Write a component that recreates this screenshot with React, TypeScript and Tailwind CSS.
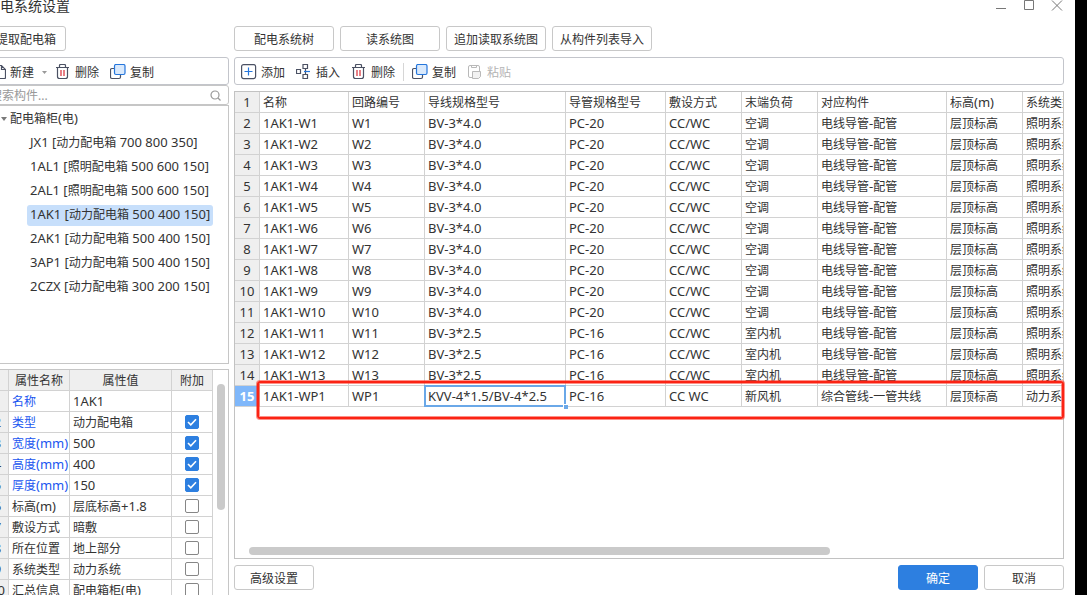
import { useState, type ReactNode } from "react";
import clsx from "clsx";

const circuitColumns = ["名称", "回路编号", "导线规格型号", "导管规格型号", "敷设方式", "末端负荷", "对应构件", "标高(m)", "系统类型"];

const acCircuit = (n: number) => [`1AK1-W${n}`, `W${n}`, "BV-3*4.0", "PC-20", "CC/WC", "空调", "电线导管-配管", "层顶标高", "照明系统"];
const indoorCircuit = (n: number) => [`1AK1-W${n}`, `W${n}`, "BV-3*2.5", "PC-16", "CC/WC", "室内机", "电线导管-配管", "层顶标高", "照明系统"];

const circuits: string[][] = [
  ...[1, 2, 3, 4, 5, 6, 7, 8, 9, 10].map(acCircuit),
  ...[11, 12, 13].map(indoorCircuit),
  ["1AK1-WP1", "WP1", "KVV-4*1.5/BV-4*2.5", "PC-16", "CC WC", "新风机", "综合管线-一管共线", "层顶标高", "动力系统"],
];

const boxes = [
  "JX1 [动力配电箱 700 800 350]",
  "1AL1 [照明配电箱 500 600 150]",
  "2AL1 [照明配电箱 500 600 150]",
  "1AK1 [动力配电箱 500 400 150]",
  "2AK1 [动力配电箱 500 400 150]",
  "3AP1 [动力配电箱 500 400 150]",
  "2CZX [动力配电箱 300 200 150]",
];

type Property = { name: string; value: string; key?: boolean; extra?: boolean };

const properties: Property[] = [
  { name: "名称", value: "1AK1", key: true },
  { name: "类型", value: "动力配电箱", key: true, extra: true },
  { name: "宽度(mm)", value: "500", key: true, extra: true },
  { name: "高度(mm)", value: "400", key: true, extra: true },
  { name: "厚度(mm)", value: "150", key: true, extra: true },
  { name: "标高(m)", value: "层底标高+1.8", extra: false },
  { name: "敷设方式", value: "暗敷", extra: false },
  { name: "所在位置", value: "地上部分", extra: false },
  { name: "系统类型", value: "动力系统", extra: false },
  { name: "汇总信息", value: "配电箱柜(电)", extra: false },
];

// Latin runs are set one size up so they balance with the 12px Chinese text
const Txt = ({ children }: { children: string }) => (
  <>
    {children.split(/([\x20-\x7e]+)/).map((part, i) =>
      i % 2 ? <span key={i} className="text-[13px] leading-none">{part}</span> : part
    )}
  </>
);

const Icon = ({ children }: { children: ReactNode }) => (
  <svg width="16" height="16" viewBox="0 0 16 16" fill="none" stroke="#4b5163" className="shrink-0" aria-hidden="true">
    {children}
  </svg>
);

const FileIcon = () => (
  <Icon>
    <path d="M3.5 1.5h8l4 4v8a1 1 0 0 1-1 1h-11a1 1 0 0 1-1-1v-11a1 1 0 0 1 1-1zM11.5 1.5v4h4" strokeWidth="1.2" />
  </Icon>
);

const TrashIcon = () => (
  <Icon>
    <path d="M1 3.5h13M4.5 3.5v-2a1 1 0 0 1 1-1h4a1 1 0 0 1 1 1v2M2.5 3.5v9a2 2 0 0 0 2 2h6a2 2 0 0 0 2-2v-9" strokeWidth="1.2" />
    <path d="M6 6v6M9 6v6" stroke="#d92b36" strokeWidth="1.2" />
  </Icon>
);

const CopyIcon = () => (
  <Icon>
    <path d="M4 4.5H2A1.5 1.5 0 0 0 .5 6v7A1.5 1.5 0 0 0 2 14.5h7a1.5 1.5 0 0 0 1.5-1.5v-2" strokeWidth="1.2" />
    <rect x="4.5" y=".5" width="10.5" height="10" rx="1.5" fill="#d9e9fc" stroke="#2576dc" strokeWidth="1.2" />
  </Icon>
);

const AddIcon = () => (
  <Icon>
    <rect x=".6" y=".6" width="14" height="14" rx="2" strokeWidth="1.2" />
    <path d="M3.5 7.5h8M7.5 3.5v8" stroke="#2576dc" strokeWidth="1.2" />
  </Icon>
);

const InsertIcon = () => (
  <Icon>
    <path d="M.5 5.500h4v4h-4zM7 .5h4.500v4H7zM7 10.500h4.500v4H7zM9.500 4.500v6" strokeWidth="1.2" />
    <path d="M8 7.5h6" stroke="#2576dc" strokeWidth="1.2" />
  </Icon>
);

const PasteIcon = () => (
  <Icon>
    <g stroke="#b9b9b9">
      <path d="M5 13.5H3A1.5 1.5 0 0 1 1.5 12V3A1.5 1.5 0 0 1 3 1.500h8A1.5 1.5 0 0 1 12.5 3v4" />
      <path d="M4.5 1.5v2h5v-2" />
      <path d="M5.5 7.5h8v5l-2 2h-6z" fill="#f2f2f2" />
    </g>
  </Icon>
);

const ToolButton = ({ icon, label, disabled }: { icon: ReactNode; label: string; disabled?: boolean }) => (
  <button type="button" disabled={disabled} className={clsx("flex items-center gap-1 whitespace-nowrap", disabled && "text-[#b4b4b4]")}>
    {icon}
    <span className="pt-0.5">{label}</span>
  </button>
);

const Button = ({ children, wide, primary }: { children: string; wide?: boolean; primary?: boolean }) => (
  <button
    type="button"
    className={clsx(
      "h-[25px] shrink-0 rounded-[3px] border pt-0.5 whitespace-nowrap",
      wide ? "w-[100px]" : "w-20",
      primary ? "border-[#2d7fe0] bg-[#2d7fe0] text-white" : "border-[#c8c8c8] bg-white"
    )}
  >
    {children}
  </button>
);

const CheckBox = ({ label, initial }: { label: string; initial: boolean }) => {
  const [checked, setChecked] = useState(initial);
  return (
    <label className="grid place-items-center">
      <input
        type="checkbox"
        aria-label={label}
        checked={checked}
        onChange={(e) => setChecked(e.target.checked)}
        className="col-start-1 row-start-1 size-3.5 appearance-none rounded-[2px] border border-[#868686] bg-white checked:border-[#2d7fe0] checked:bg-[#2d7fe0]"
      />
      {checked && (
        <svg width="10" height="10" viewBox="0 0 10 10" fill="none" stroke="#fff" strokeWidth="1.6" className="pointer-events-none col-start-1 row-start-1">
          <path d="M1 5l2.8 2.8L9 2.2" />
        </svg>
      )}
    </label>
  );
};

const TitleBar = () => (
  <header className="flex h-[26px] shrink-0 items-start justify-between">
    <h1 className="text-sm leading-3 whitespace-nowrap">电系统设置</h1>
    <div className="flex gap-4 pr-px text-[#777]">
      <button type="button" aria-label="最小化" className="h-3 w-3">
        <svg width="12" height="12" viewBox="0 0 12 12" stroke="currentColor"><path d="M1 8.5h10" /></svg>
      </button>
      <button type="button" aria-label="最大化" className="h-3 w-3">
        <svg width="12" height="12" viewBox="0 0 12 12" fill="none" stroke="currentColor"><path d="M1.5.5h9v9h-9z" /></svg>
      </button>
      <button type="button" aria-label="关闭" className="h-3 w-3">
        <svg width="12" height="12" viewBox="0 0 12 12" stroke="currentColor"><path d="M1 .5l10 10M11 .5l-10 10" /></svg>
      </button>
    </div>
  </header>
);

const BoxTree = ({ selected, onSelect }: { selected: number; onSelect: (i: number) => void }) => (
  <div className="h-[259px] shrink-0 border border-[#c6c6c6] pl-[14px]">
    <div className="flex h-6 items-center gap-[3px] pt-0.5">
      <svg width="6" height="4" viewBox="0 0 6 4" fill="#7a7a7a" aria-hidden="true"><path d="M0 0h6L3 4z" /></svg>
      <span><Txt>配电箱柜(电)</Txt></span>
    </div>
    <ul className="pt-px pl-[26px]">
      {boxes.map((box, i) => (
        <li key={box} className="flex h-6 items-center">
          <button
            type="button"
            onClick={() => onSelect(i)}
            className={clsx("h-[21px] rounded-[3px] px-[3px] leading-5 whitespace-nowrap", i === selected && "bg-[#c7dffb]")}
          >
            <Txt>{box}</Txt>
          </button>
        </li>
      ))}
    </ul>
  </div>
);

const cell = "h-[21px] overflow-hidden border-r border-b border-[#d2d2d2] p-0 leading-[18px] whitespace-nowrap";

const PropertyTable = () => (
  <div className="mt-[5px] flex min-h-0 flex-1 items-start overflow-hidden border border-b-0 border-[#c6c6c6]">
    <table className="w-[226px] shrink-0 table-fixed border-separate border-spacing-0">
      <colgroup>
        <col className="w-[22px]" />
        <col className="w-[61px]" />
        <col className="w-[102px]" />
        <col className="w-[41px]" />
      </colgroup>
      <thead>
        <tr className="bg-[#efefef]">
          <th className={cell} />
          <th className={clsx(cell, "pt-0.5 font-normal")}>属性名称</th>
          <th className={clsx(cell, "pt-0.5 font-normal")}>属性值</th>
          <th className={clsx(cell, "pt-0.5 font-normal")}>附加</th>
        </tr>
      </thead>
      <tbody>
        {properties.map((p, i) => (
          <tr key={p.name}>
            <th className={clsx(cell, "bg-[#efefef] text-center text-[13px] font-normal")}>{i + 1}</th>
            <td className={clsx(cell, "pt-0.5 pl-[3px]", p.key && "text-[#1a56f0]")}><Txt>{p.name}</Txt></td>
            <td className={clsx(cell, "pt-0.5 pl-[3px]")}><Txt>{p.value}</Txt></td>
            <td className={cell}>{p.extra !== undefined && <CheckBox label={`附加 ${p.name}`} initial={p.extra} />}</td>
          </tr>
        ))}
      </tbody>
    </table>
    <div className="mt-3.5 ml-1 h-[126px] w-2 rounded-full bg-[#cacaca]" />
  </div>
);

const CircuitGrid = () => (
  <div className="relative mt-1.5 flex min-h-0 flex-1 flex-col">
    <div className="flex min-h-0 flex-1 flex-col justify-between overflow-hidden border border-[#c2c2c2]">
      <table className="w-[877px] table-fixed border-separate border-spacing-0">
        <colgroup>
          <col className="w-[25px]" />
          <col className="w-[89px]" />
          <col className="w-[76px]" />
          <col className="w-[141px]" />
          <col className="w-[100px]" />
          <col className="w-[76px]" />
          <col className="w-[76px]" />
          <col className="w-[129px]" />
          <col className="w-[76px]" />
          <col className="w-[89px]" />
        </colgroup>
        <thead>
          <tr>
            <th className={clsx(cell, "bg-[#efefef] text-[13px] font-normal")}>1</th>
            {circuitColumns.map((c) => (
              <th key={c} className={clsx(cell, "pt-0.5 pl-[3px] text-left font-normal")}><Txt>{c}</Txt></th>
            ))}
          </tr>
        </thead>
        <tbody>
          {circuits.map((row, r) => {
            const current = r === circuits.length - 1;
            return (
              <tr key={row[0]}>
                <th className={clsx(cell, "text-[13px]", current ? "bg-[#7fb7fa] font-bold text-white" : "bg-[#efefef] font-normal")}>
                  {r + 2}
                </th>
                {row.map((value, c) =>
                  current && c === 2 ? (
                    <td key={c} className="relative h-[21px] border-r border-b border-transparent p-0 pt-0.5 pl-[3px] leading-[18px] whitespace-nowrap">
                      <Txt>{value}</Txt>
                      <span className="absolute -inset-px border-2 border-[#6aa8e8]" />
                      <span className="absolute -right-[3px] -bottom-[3px] size-[5px] border-t border-l border-white bg-[#6aa8e8]" />
                    </td>
                  ) : (
                    <td key={c} className={clsx(cell, "pt-0.5 pl-[3px]")}><Txt>{value}</Txt></td>
                  )
                )}
              </tr>
            );
          })}
        </tbody>
      </table>
      <div className="mr-[233px] mb-[3px] ml-3.5 h-2 rounded-full bg-[#cacaca]" />
    </div>
    {/* marker around the fresh-air unit circuit */}
    <div className="pointer-events-none absolute top-[290px] right-0 left-[23px] h-[38px] rounded-[3px] border-2 border-[#fb2314] shadow-[0_0_0_1px_rgba(251,35,20,0.5),inset_0_0_0_1px_rgba(251,35,20,0.5)]" />
  </div>
);

export default function App() {
  const [selected, setSelected] = useState(3);
  const [query, setQuery] = useState("");

  return (
    <div className="flex h-screen overflow-hidden bg-white font-['Noto_Sans','Noto_Sans_CJK_SC',sans-serif] text-xs text-[#333]">
      <div className="flex min-w-0 flex-1 flex-col pr-[11px]">
        <TitleBar />
        <div className="flex min-h-0 flex-1 gap-[5px]">
          <aside className="flex w-[229px] shrink-0 overflow-hidden">
            <div className="-ml-3.5 flex min-w-0 flex-1 flex-col">
              <Button>提取配电箱</Button>
              <div className="mt-1.5 flex h-7 shrink-0 items-center gap-[11px] rounded-[3px] border border-[#c3c5cb] pt-0.5 pl-[3px]">
                <div className="flex items-center gap-2">
                  <ToolButton icon={<FileIcon />} label="新建" />
                  <svg width="5" height="3" viewBox="0 0 5 3" fill="#999" className="-mr-[3px]" aria-hidden="true"><path d="M0 0h5L2.5 3z" /></svg>
                </div>
                <ToolButton icon={<TrashIcon />} label="删除" />
                <ToolButton icon={<CopyIcon />} label="复制" />
              </div>
              <div className="flex h-5 shrink-0 items-center rounded-[3px] border border-[#c6c6c6] pt-px pr-[7px] pl-[3px]">
                <input
                  type="text"
                  aria-label="搜索构件"
                  placeholder="搜索构件..."
                  value={query}
                  onChange={(e) => setQuery(e.target.value)}
                  className="min-w-0 flex-1 outline-none placeholder:text-[#999]"
                />
                <svg width="11" height="11" viewBox="0 0 11 11" fill="none" stroke="#999" strokeWidth="1.2" aria-hidden="true">
                  <circle cx="5" cy="5" r="4" />
                  <path d="M8 8l2.5 2.5" />
                </svg>
              </div>
              <BoxTree selected={selected} onSelect={setSelected} />
              <PropertyTable />
            </div>
          </aside>

          <main className="flex min-w-0 flex-1 flex-col pb-[5px]">
            <div className="flex gap-1.5">
              <Button wide>配电系统树</Button>
              <Button wide>读系统图</Button>
              <Button wide>追加读取系统图</Button>
              <Button wide>从构件列表导入</Button>
            </div>
            <div className="mt-1.5 flex h-7 shrink-0 items-center gap-[11px] rounded-[3px] border border-[#c3c5cb] pt-0.5 pl-1.5">
              <ToolButton icon={<AddIcon />} label="添加" />
              <ToolButton icon={<InsertIcon />} label="插入" />
              <div className="flex items-center gap-2">
                <ToolButton icon={<TrashIcon />} label="删除" />
                <span className="h-[18px] w-px bg-[#d6d6d6]" />
                <ToolButton icon={<CopyIcon />} label="复制" />
              </div>
              <ToolButton icon={<PasteIcon />} label="粘贴" disabled />
            </div>
            <CircuitGrid />
            <footer className="mt-1.5 flex shrink-0 gap-1.5">
              <Button>高级设置</Button>
              <span className="flex-1" />
              <Button primary>确定</Button>
              <Button>取消</Button>
            </footer>
          </main>
        </div>
      </div>
      <div className="w-3 shrink-0 bg-black" />
    </div>
  );
}
